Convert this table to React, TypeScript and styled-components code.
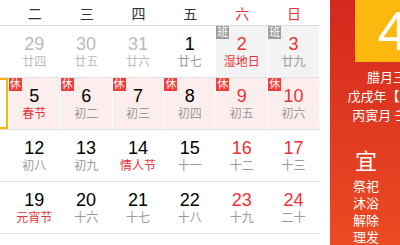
import React from 'react'
import styled, { createGlobalStyle } from 'styled-components'

const GlobalStyle = createGlobalStyle`
  html, body {
    margin: 0;
    padding: 0;
    background: #fff;
  }
  body {
    font-family: "Liberation Sans", "Noto Sans CJK SC", sans-serif;
  }
`

type Day = {
  n: number
  lunar: string
  fest?: boolean
  out?: boolean
  badge?: 'rest' | 'work'
  selected?: boolean
}

const weekdays = ['一', '二', '三', '四', '五', '六', '日']

const weeks: Day[][] = [
  [
    { n: 28, lunar: '小年', out: true },
    { n: 29, lunar: '廿四', out: true },
    { n: 30, lunar: '廿五', out: true },
    { n: 31, lunar: '廿六', out: true },
    { n: 1, lunar: '廿七' },
    { n: 2, lunar: '湿地日', fest: true, badge: 'work' },
    { n: 3, lunar: '廿九', badge: 'work' },
  ],
  [
    { n: 4, lunar: '除夕', fest: true, badge: 'rest', selected: true },
    { n: 5, lunar: '春节', fest: true, badge: 'rest' },
    { n: 6, lunar: '初二', badge: 'rest' },
    { n: 7, lunar: '初三', badge: 'rest' },
    { n: 8, lunar: '初四', badge: 'rest' },
    { n: 9, lunar: '初五', badge: 'rest' },
    { n: 10, lunar: '初六', badge: 'rest' },
  ],
  [
    { n: 11, lunar: '初七' },
    { n: 12, lunar: '初八' },
    { n: 13, lunar: '初九' },
    { n: 14, lunar: '情人节', fest: true },
    { n: 15, lunar: '十一' },
    { n: 16, lunar: '十二' },
    { n: 17, lunar: '十三' },
  ],
  [
    { n: 18, lunar: '十四' },
    { n: 19, lunar: '元宵节', fest: true },
    { n: 20, lunar: '十六' },
    { n: 21, lunar: '十七' },
    { n: 22, lunar: '十八' },
    { n: 23, lunar: '十九' },
    { n: 24, lunar: '二十' },
  ],
]

const good = ['祭祀', '沐浴', '解除', '理发']
const bad = ['嫁娶', '开市', '安葬', '动土']

const RED = '#ec3137'

const App = () => {
  return (
    <Page>
      <GlobalStyle />
      <Calendar>
        <Grid>
          <HeadRow>
            {weekdays.map((w, i) => (
              <HeadCell key={w} $weekend={i > 4}>
                {w}
              </HeadCell>
            ))}
          </HeadRow>
          {weeks.map((row, r) => (
            <WeekRow key={r}>
              {row.map((d, i) => (
                <Cell key={d.n} $badge={d.badge} $selected={d.selected}>
                  {d.badge && <Badge $type={d.badge}>{d.badge === 'rest' ? '休' : '班'}</Badge>}
                  <Num $out={d.out} $weekend={i > 4}>
                    {d.n}
                  </Num>
                  <Lunar $out={d.out} $fest={d.fest}>
                    {d.lunar}
                  </Lunar>
                </Cell>
              ))}
            </WeekRow>
          ))}
        </Grid>
      </Calendar>

      <Panel>
        <BigDay>4</BigDay>
        <InfoLine $first>腊月三十</InfoLine>
        <InfoLine>戊戌年【狗年】</InfoLine>
        <InfoLine>丙寅月 壬申日</InfoLine>
        <Divider />
        <Advice>
          <AdviceCol>
            <AdviceTitle>宜</AdviceTitle>
            {good.map((g) => (
              <AdviceItem key={g}>{g}</AdviceItem>
            ))}
          </AdviceCol>
          <AdviceCol>
            <AdviceTitle>忌</AdviceTitle>
            {bad.map((g) => (
              <AdviceItem key={g}>{g}</AdviceItem>
            ))}
          </AdviceCol>
        </Advice>
      </Panel>
    </Page>
  )
}

export default App

const Page = styled.div`
  display: flex;
  width: 400px;
  height: 245px;
  overflow: hidden;
  background: #fff;
`

const Calendar = styled.section`
  width: 320px;
  flex-shrink: 0;
  overflow: hidden;
`

const Grid = styled.div`
  width: 363px;
  margin-left: -43px;
`

const HeadRow = styled.div`
  display: grid;
  grid-template-columns: repeat(7, 1fr);
  align-items: center;
  height: 25px;
  border-bottom: 1px solid #dcdcdc;
`

const HeadCell = styled.div<{ $weekend?: boolean }>`
  text-align: center;
  font-size: 14px;
  color: ${(p) => (p.$weekend ? RED : '#333')};
`

const WeekRow = styled.div`
  display: grid;
  grid-template-columns: repeat(7, 1fr);
  border-bottom: 1px solid #e2e2e2;
`

const Cell = styled.div<{ $badge?: 'rest' | 'work'; $selected?: boolean }>`
  position: relative;
  box-sizing: border-box;
  height: 51px;
  padding-top: 8px;
  text-align: center;
  border-right: 1px solid #fff;
  background: ${(p) =>
    p.$selected ? '#fff' : p.$badge === 'rest' ? '#fdeeee' : p.$badge === 'work' ? '#f3f3f3' : '#fff'};
  box-shadow: ${(p) => (p.$selected ? 'inset 0 0 0 2px #fdb400' : 'none')};
`

const Badge = styled.span<{ $type: 'rest' | 'work' }>`
  position: absolute;
  top: 0;
  left: 0;
  width: 13px;
  height: 13px;
  font-size: 11px;
  line-height: 13px;
  text-align: center;
  color: #fff;
  background: ${(p) => (p.$type === 'rest' ? '#f43d3a' : '#9d9d9d')};
`

const Num = styled.div<{ $out?: boolean; $weekend?: boolean }>`
  font-size: 18px;
  line-height: 20px;
  color: ${(p) => (p.$out ? '#bbb' : p.$weekend ? RED : '#000')};
`

const Lunar = styled.div<{ $out?: boolean; $fest?: boolean }>`
  font-size: 12px;
  line-height: 16px;
  color: ${(p) => (p.$out ? '#bbb' : p.$fest ? RED : '#999')};
`

const Panel = styled.aside`
  display: flex;
  flex-direction: column;
  align-items: center;
  flex-shrink: 0;
  width: 126px;
  margin-left: 10px;
  color: #fff;
  background: linear-gradient(180deg, #d4281e 0%, #eb4b23 100%);
`

const BigDay = styled.div`
  width: 76px;
  height: 64px;
  background: #fdb80f;
  font-size: 56px;
  line-height: 62px;
  text-align: center;
`

const InfoLine = styled.div<{ $first?: boolean }>`
  margin-top: ${(p) => (p.$first ? '6px' : '0')};
  font-size: 13px;
  line-height: 19px;
  white-space: nowrap;
`

const Divider = styled.div`
  align-self: stretch;
  height: 1px;
  margin: 9px 9px 0;
  background: rgba(255, 255, 255, 0.45);
`

const Advice = styled.div`
  display: grid;
  grid-template-columns: 1fr 1fr;
  align-self: stretch;
  padding: 0 9px;
  margin-top: 15px;
`

const AdviceCol = styled.div`
  display: flex;
  flex-direction: column;
  align-items: center;
`

const AdviceTitle = styled.div`
  font-size: 22px;
  line-height: 26px;
  margin-bottom: 3px;
`

const AdviceItem = styled.div`
  font-size: 13px;
  line-height: 17px;
`
